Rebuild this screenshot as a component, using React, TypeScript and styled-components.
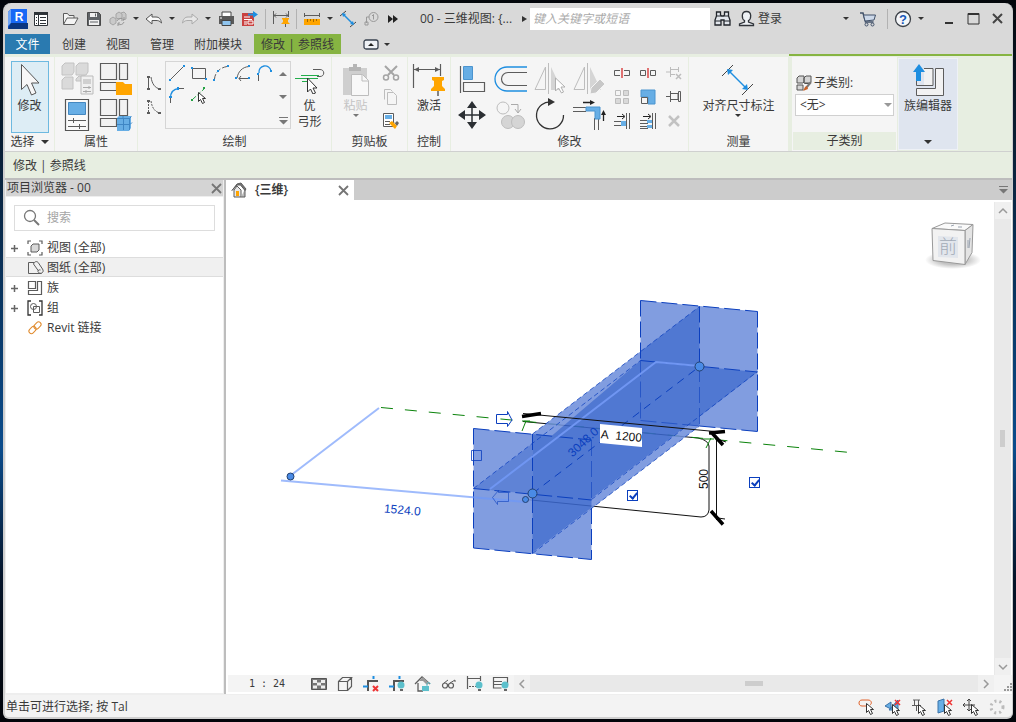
import React from "react";
import styled, { createGlobalStyle, css } from "styled-components";

const c = {
  ink: "#3a3a3a",
  line: "#5c5c5c",
  off: "#bdbdbd",
  chrome: "#d9d9d9",
  panel: "#f5f5f5",
  mint: "#e7eee1",
  green: "#86b442",
  blue: "#1e8ee0",
  sky: "#67aee5",
  orange: "#ffa500",
  model: "#0b3fbe",
};

const Global = createGlobalStyle`
  * { box-sizing: border-box; }
  body {
    margin: 0;
    background: linear-gradient(180deg, #03060b, #0a1a2b 15%, #0b4c8c 62%, #06152a 80%, #020409);
    color: ${c.ink};
    font: 12px/16px "Open Sans", "Noto Sans CJK SC", sans-serif;
  }
  button, input, select { font: inherit; color: inherit; }
  button { padding: 0; border: 0; background: none; }
  svg { display: block; flex: none; fill: none; }
`;

/* ---------- icons ---------- */

const L = c.line;
const icons: Record<string, [number, number, React.ReactNode]> = {
  logo: [20, 22, <>
    <path d="M3 1h16v17H3z" fill="#1868f5" /><path d="M3 1v17l-3 3V4z" fill="#0b4fc4" /><path d="M0 4l3-3v14l-3 3z" fill="#6fa5f5" />
    <path d="M0 21l3-6h17v6z" fill="#0a3580" />
    <text x="11" y="13" textAnchor="middle" fontSize="12" fontWeight="700" fontFamily="Liberation Sans, sans-serif" fill="#fff">R</text>
  </>],
  doc: [16, 16, <>
    <path d="M1.500 1.500h13v13h-13z" fill="#fff" stroke="#2e3338" strokeWidth="1" /><path d="M1 1h14v3H1z" fill="#2e3338" />
    <path d="M5.500 4v10M3 6.500h1M3 9.500h1M3 12.500h1M7 6.500h6M7 9.500h6M7 12.500h6" stroke="#2e3338" />
  </>],
  open: [17, 16, <><path d="M1.500 13V2.500h4l1.500 2h5v2.500M1.500 13.500l3.500-6.500h11l-3.500 6.500z" fill="#f4f4f4" stroke={L} /></>],
  save: [16, 16, <>
    <path d="M1.500 1.500h11l2 2v11h-13z" fill="#5f6367" stroke="#4a4a4a" /><path d="M4 2h7v4H4zM3 9h10v5H3z" fill="#f0f0f0" />
    <path d="M4 11h8M9.500 2.500v3" stroke="#5f6367" />
  </>],
  sync: [18, 17, <>
    <path d="M1 9l3-2 3 2v4l-3 2-3-2zM7 4l3-2 3 2v4l-3 1-3-1zM12 3l3-1 2 2v5l-3 1" fill="#c9c9c9" stroke="#a5a5a5" />
    <path d="M8 11a4 4 0 0 1 7-1M15 12a4 4 0 0 1-6 2M15 7v3h-3M9 16v-3h2" stroke="#979797" />
  </>],
  undo: [18, 14, <path d="M1 7l6-5v3h4c3 0 5 2 5.500 6-2-2.500-4-2.500-5.500-2.500H7V12z" fill="#fafafa" stroke="#555" />],
  redo: [18, 14, <path d="M17 7l-6-5v3H7c-3 0-5 2-5.500 6 2-2.500 4-2.500 5.500-2.500h4V12z" fill="#e6e6e6" stroke="#aaa" />],
  print: [17, 16, <>
    <path d="M4 1h9v5H4z" fill="#fff" stroke="#444" /><path d="M1 5h15v8H1z" fill="#5a5a5a" /><path d="M4 9.500h9v5H4z" fill="#8fc4ee" stroke="#444" />
    <path d="M2 7h2" stroke="#fff" />
  </>],
  exportPdf: [18, 17, <>
    <path d="M1 3h12v13H1z" fill="#c9413f" /><path d="M3 7h6M3 9.500h8M3 12h3M3 14h3" stroke="#fff" /><path d="M7 11h5v3H7z" stroke="#fff" />
    <path d="M7 3.500h5V1l5 3.500-5 3.500V5.500H7z" fill={c.blue} />
  </>],
  dimPin: [18, 17, <>
    <path d="M1.500 1v13M16.500 1v6M2 5.500h14M4 3.500l-2 2 2 2M14 3.500l2 2-2 2" stroke={L} />
    <path d="M10 8h7v1l-1 1v2l2 2H9l2-2v-2l-1-1z" fill={c.orange} /><path d="M13.500 14v3" stroke={L} />
  </>],
  ruler: [18, 14, <>
    <path d="M1.500 1v4M16.500 1v4M2 3.500h14" stroke={L} /><path d="M1 7h16v6H1z" fill={c.orange} /><path d="M4.500 7v3M7.500 7v2M10.500 7v3M13.500 7v2" stroke="#a56a00" />
  </>],
  aligned: [18, 18, <>
    <path d="M1 6l6-5M11 17l6-5" stroke="#444" /><path d="M4 4l10 10" stroke={c.blue} strokeWidth="1.500" /><path d="M3 3l4 1-3 3zM15 15l-4-1 3-3z" fill={c.blue} />
  </>],
  tag: [16, 16, <>
    <circle cx="9.500" cy="6" r="4.500" stroke="#999" /><path d="M9.500 3.500v5M8 5l1.500-1.500M5 6H2.500v6" stroke="#999" /><path d="M1 11h3v3H1z" stroke="#999" />
  </>],
  forward: [12, 10, <path d="M1 1l5 4-5 4zM6 1l5 4-5 4z" fill="#222" />],
  binoculars: [17, 17, <>
    <path d="M2.500 2h4v3l1 1h2l1-1V2h4v4l1.500 4v5h-6v-5h-3v5H1v-5l1.500-4z" fill="#e2e6ec" stroke="#20242a" strokeWidth="1.300" />
    <path d="M3 6h4M10 6h4M1 11h6M10 11h6" stroke="#20242a" />
  </>],
  user: [17, 17, <path d="M8.500 1.500c6 0 4.500 8 2 9v1.500l5 2v1.500H1.500V14l5-2v-1.500c-2.500-1-4-9 2-9z" fill="#eef1f5" stroke="#30343a" strokeWidth="1.300" />],
  cart: [18, 16, <>
    <path d="M1 2h3l2.500 9h8" stroke="#41516a" strokeWidth="1.500" /><path d="M4.500 4h12l-1.500 5-9 1z" fill="#cdd9ea" stroke="#41516a" /><circle cx="7.500" cy="13.500" r="1.500" stroke="#41516a" /><circle cx="13.500" cy="13.500" r="1.500" stroke="#41516a" />
  </>],
  help: [18, 18, <>
    <circle cx="9" cy="9" r="7.500" fill="#f5f7fa" stroke="#3c4148" strokeWidth="1.300" />
    <text x="9" y="13.500" textAnchor="middle" fontSize="13" fontWeight="700" fontFamily="Liberation Sans, sans-serif" fill="#1858b8">?</text>
  </>],
  minimize: [12, 14, <path d="M2 10h8v2H2z" fill="#333" />],
  maximize: [13, 13, <><path d="M1 1.500h11v10.500H1z" stroke="#333" /><path d="M1 2h11" stroke="#333" strokeWidth="2" /></>],
  close: [13, 13, <path d="M2 2l9 9M11 2l-9 9" stroke="#444" strokeWidth="2" />],
  closeSmall: [11, 11, <path d="M1 1l9 9M10 1L1 10" stroke="#757575" strokeWidth="1.800" />],
  display: [16, 11, <><rect x="1" y="1" width="14" height="9" rx="2" fill="#eef1f5" stroke="#39424f" strokeWidth="1.300" /><path d="M8 4l3 3H5z" fill="#222" /></>],
  arrow: [22, 34, <path d="M2.500 1.500v25l5.500-5 4.500 10.500 4.500-2-4.500-10h7.500z" fill="#f7f7f7" stroke="#555" />],
  typeProps: [34, 34, <>
    <path d="M2 4l3-3h9v9l-2 3H2zM16 4l3-3h9v9l-2 3H16zM2 18l3-3h8v12H2zM16 17l3-3h6v5h-9z" fill="#dadada" stroke="#c2c2c2" />
    <path d="M21 14h12v18H21z" fill="#f0f0f0" stroke="#bbb" /><path d="M23 17h8v5h-8z" fill="#d0d0d0" /><path d="M23 25.500h8M23 29.500h8M29 24v3M26 28v3" stroke="#aaa" />
  </>],
  famFolder: [34, 34, <>
    <path d="M1.500 1.500h16v16h-16zM20.500 1.500h8v16h-8zM1.500 20.500h16v8h-16z" fill="#f2f2f2" stroke={L} strokeWidth="1.200" /><path d="M17 20h7l2 2h7v11H17z" fill={c.orange} />
  </>],
  properties: [26, 34, <>
    <path d="M1.500 1.500h23v31h-23z" fill="#fafafa" stroke="#555" strokeWidth="1.200" /><path d="M4.500 4.500h17v12h-17z" fill={c.sky} stroke="#4588c0" />
    <path d="M4 22.500h18M4 28.500h18M9.500 20v5M15.500 26v5" stroke={L} />
  </>],
  famCube: [34, 34, <>
    <path d="M1.500 1.500h16v16h-16zM20.500 1.500h8v16h-8zM1.500 20.500h16v8h-16z" fill="#f2f2f2" stroke={L} strokeWidth="1.200" />
    <path d="M18 20l2-2h12v12l-2 3H18z" fill={c.sky} /><path d="M18 20.500h6v-2.500M24.500 20.500h6l2-2M18 26.500h13l2-2M24.500 20v12M30.500 20v12" stroke="#3f86c4" />
  </>],
  spline: [18, 16, <><path d="M3.500 2v13M6 2c1 7 4 11 9 12" stroke={L} /><path d="M2 1h3v2H2zM2 13h3v2H2zM13 13h3v2h-3z" fill={L} /></>],
  splineDash: [18, 16, <><path d="M3.500 2v13M6 2c1 7 4 11 9 12" stroke={L} strokeDasharray="2 1" /><path d="M2 1h3v2H2zM2 13h3v2H2zM13 13h3v2h-3z" fill={L} /></>],
  dLine: [18, 18, <><path d="M3 15L15 3" stroke={L} /><path d="M1 15h2v2H1zM15 1h2v2h-2z" fill={c.blue} /></>],
  dRect: [18, 18, <><path d="M2.500 4.500h13v10h-13z" stroke={L} /><path d="M1 3h2v2H1zM15 14h2v2h-2z" fill={c.blue} /></>],
  dArc: [18, 18, <><path d="M2.500 15C3 9 7 4 15 2.500" stroke={L} strokeDasharray="5 2" /><path d="M1 15h2v2H1zM5 6h2v2H5zM15 1h2v2h-2z" fill={c.blue} /></>],
  dCenterArc: [18, 18, <><path d="M3 14C4 8 8 3 15 2.500M5 14.500h9M7 12l-2 2.500L7 17" stroke={L} /><path d="M1 13h2v2H1zM14 1h2v2h-2zM14 13h2v2h-2z" fill={c.blue} /></>],
  dTangent: [18, 18, <><path d="M3 9a6 6 0 0 1 12-2" stroke={c.blue} strokeWidth="1.300" /><path d="M2.500 11v6" stroke={L} /><path d="M1 9h2v2H1zM14 6h2v2h-2z" fill={c.blue} /></>],
  dFillet: [18, 18, <><path d="M2.500 12C2.500 6 6 3 11 2.500" stroke={c.blue} strokeWidth="1.300" /><path d="M2.500 12v5M11 2.500h5" stroke={L} /><path d="M1 10h3v2H1zM9 1h2v3H9z" fill={c.blue} /></>],
  dPick: [18, 18, <>
    <path d="M3 13L14 3" stroke="#25a244" strokeDasharray="4 2" /><path d="M1 13h2v2H1zM13 1h2v2h-2z" fill="#25a244" /><path d="M8.500 6.500v9l2-2 2 4 2-1-2-4h3z" fill="#fff" stroke="#333" />
  </>],
  youGong: [32, 28, <>
    <path d="M1 12.500h23M7 9.500h18M8 15.500h8" stroke="#23ad4b" strokeWidth="1.200" /><path d="M19 3.500h7c5 0 5 7 0 7h-3" stroke={L} />
    <path d="M13.500 12v14l3-3 2.500 5 2.500-1-2.500-5h4z" fill="#fff" stroke="#333" />
  </>],
  paste: [28, 34, <>
    <path d="M1 5h24v27H1z" fill="#cfcfcf" /><path d="M7 4h4V1h4v3h4v4H7z" fill="#b5b5b5" /><path d="M9.500 11.500h11l6 6v15h-17z" fill="#f8f8f8" stroke={c.off} /><path d="M20 12v6h6" stroke={c.off} />
  </>],
  cut: [18, 18, <><path d="M3 2l9 9M15 2l-9 9" stroke="#a5a5a5" strokeWidth="2" /><circle cx="4" cy="13.500" r="2.500" stroke="#a5a5a5" strokeWidth="1.500" /><circle cx="14" cy="13.500" r="2.500" stroke="#a5a5a5" strokeWidth="1.500" /></>],
  copyDoc: [18, 18, <path d="M2.500 11.500v-10h6l2 2M5.500 4.500h6l3 3v9h-9z" fill="#f5f5f5" stroke={c.off} />],
  match: [18, 18, <>
    <path d="M1.500 1.500h10v13h-10z" fill="#fff" stroke={L} /><path d="M3 3h7v4H3z" fill={c.sky} /><path d="M3 9.500h5M3 12.500h5" stroke={L} />
    <path d="M7 11l3-2 5 5-2 3z" fill={c.orange} /><path d="M11 9l2 2 2-2 2 2-2 3z" fill="#666" />
  </>],
  activate: [34, 34, <>
    <path d="M1.500 1v24M28.500 1v12M2 6.500h26" stroke={L} strokeWidth="1.200" /><path d="M2 6.500l5-2.500v5zM28 6.500L23 4v5z" fill={L} />
    <path d="M20 14h12v3l-2 1v5l3 3v2H19v-2l3-3v-5l-2-1z" fill={c.orange} /><path d="M26 28v5" stroke={L} strokeWidth="1.500" />
  </>],
  align: [32, 32, <>
    <path d="M4.500 3v27" stroke={L} strokeWidth="1.200" /><path d="M7.500 3.500h9v13h-9z" fill={c.sky} stroke="#4b94cf" /><path d="M7.500 19.500h21v9h-21z" stroke={L} strokeWidth="1.200" />
  </>],
  offset: [34, 32, <><path d="M33 4H13a12 12 0 0 0 0 24h20" stroke={c.blue} strokeWidth="1.300" /><path d="M33 9.500H14a6.500 6.500 0 0 0 0 13h19" stroke={L} strokeWidth="1.200" /></>],
  mirrorPick: [34, 34, <>
    <path d="M2 27.500L12.500 5v22.500z" stroke={c.off} /><path d="M15.500 1v31" stroke={c.off} /><path d="M18 5v23h11z" fill="#d5d5d5" /><path d="M22.500 16v13l3-3 3 5 2-1-2.500-5h4z" fill="#fff" stroke="#b0b0b0" />
  </>],
  mirrorDraw: [34, 34, <>
    <path d="M2 27.500L12.500 5v22.500z" stroke={c.off} /><path d="M15.500 1v31" stroke={c.off} /><path d="M18 5v23h11z" fill="#d5d5d5" /><path d="M18 32l1-6 9-9 5 5-9 9z" fill="#c8c8c8" stroke="#f5f5f5" />
  </>],
  move: [32, 32, <><path d="M16 5v22M5 16h22" stroke="#2b2f33" strokeWidth="1.500" /><path d="M16 2l5 7H11zM16 30l5-7H11zM2 16l7-5v10zM30 16l-7-5v10z" fill="#2b2f33" /></>],
  copy: [34, 32, <>
    <circle cx="9" cy="9" r="6" stroke={c.off} /><path d="M17 5.500h7v8M21 10l3 4 3-4" stroke="#aaa" /><circle cx="14" cy="23" r="6.500" fill="#d5d5d5" stroke={c.off} /><circle cx="24" cy="23" r="6.500" fill="#d5d5d5" stroke={c.off} />
  </>],
  rotate: [34, 34, <><path d="M19 4a13.500 13.500 0 1 0 11.500 13" stroke="#333" strokeWidth="1.300" /><path d="M15 0l7 4-7 4z" fill="#333" /></>],
  trim: [34, 32, <>
    <path d="M1 8.500h13M1 12.500h13M22.500 19v12M26.500 19v12" stroke={L} /><path d="M14 8h14v12h-5v-8h-9z" fill={c.sky} stroke="#4b94cf" /><path d="M11 3.500h8M31.500 22v-7" stroke="#222" strokeWidth="1.300" /><path d="M18 1l5 2.500L18 6zM29 16l2.500-5 2.500 5z" fill="#222" />
  </>],
  split: [18, 12, <><path d="M7 3.500H1.500v5H7M11 3.500h5.500v5H11" stroke={L} /><path d="M9 1v10" stroke="#d52b2b" strokeWidth="1.300" /></>],
  splitGap: [18, 12, <><path d="M1.500 3.500h5v5h-5zM11.500 3.500h5v5h-5z" stroke={L} /><path d="M9 1v10" stroke="#d52b2b" strokeWidth="1.300" /></>],
  unpin: [18, 16, <><path d="M1 7h4M5.500 2v10M6 4.500h7M6 9.500h4M13.500 2v5" stroke={c.off} /><path d="M11 9l5 5M16 9l-5 5" stroke={c.off} strokeWidth="1.500" /></>],
  array: [18, 18, <><path d="M2.500 2.500h5v5h-5z" stroke={c.off} /><path d="M10.500 2.500h5v5h-5zM2.500 10.500h5v5h-5zM10.500 10.500h5v5h-5z" fill="#d9d9d9" stroke={c.off} /></>],
  scale: [18, 18, <><path d="M2 2h14v14H9V9H2z" fill={c.sky} stroke="#4b94cf" /><path d="M2.500 9.500h6v6h-6z" stroke={L} /></>],
  pin: [18, 16, <path d="M1 7.500h4M5.500 2v11M6 4.500h7v6H6M13.500 2.500v10h2v-10z" stroke={L} />],
  trimOne: [18, 18, <><path d="M1 9.500h8M1 13.500h8M13.500 1v16M16.500 1v16" stroke={L} /><path d="M8 9h5v5H8z" fill={c.sky} /><path d="M4 4.500h7M9 2l3 2.500L9 7" stroke="#222" /></>],
  trimMany: [18, 18, <><path d="M1 8.500h8M1 11.500h8M1 14.500h8M1 16.500h8M13.500 1v16M16.500 1v16" stroke={L} /><path d="M8 8h5v3H8zM8 13h5v3H8z" fill={c.sky} /><path d="M4 4.500h7M9 2l3 2.500L9 7" stroke="#222" /></>],
  del: [18, 16, <path d="M4 3l10 10M14 3L4 13" stroke="#c2c2c2" strokeWidth="2.500" />],
  measure: [34, 34, <>
    <path d="M1 13L12 2M21 32l11-11" stroke="#444" /><path d="M8 8l17 17" stroke={c.blue} strokeWidth="1.500" /><path d="M6 6l6 1-5 5zM27 27l-6-1 5-5z" fill={c.blue} />
  </>],
  subcat: [18, 18, <>
    <path d="M2 4l2-2h5v6l-1 1H2zM9 4l2-2h5v6l-1 1H9zM2 11h6v5H2z" fill="#d5d5d5" stroke="#555" /><path d="M9.500 9.500h6" stroke="#555" /><path d="M16 8l-5 6" stroke="#777" strokeWidth="2" /><path d="M12 12l-2 1-2 4 5-2z" fill="#c8622a" />
  </>],
  family: [34, 34, <>
    <path d="M6.500 5.500H22V22.500H6.500zM24.500 5.500h8v27h-27v-7h19z" fill="#f2f2f2" stroke={L} /><path d="M5 5h8v17H5z" fill="#dfe5ef" /><path d="M5.500 18v4.500h9" stroke={L} /><path d="M8 1l6 8h-4v9H5V9H2z" fill={c.blue} />
  </>],
  search: [18, 18, <><circle cx="7" cy="7" r="5.500" stroke="#777" strokeWidth="1.300" /><path d="M11 11l5 5" stroke="#777" strokeWidth="2" /></>],
  views: [16, 16, <>
    <path d="M1 4V1h3M12 1h3v3M15 12v3h-3M4 15H1v-3" stroke={L} strokeWidth="1.200" /><path d="M4 6l2-2h6v6l-2 2H4z" fill="#d8d8d8" stroke={L} />
  </>],
  sheets: [18, 16, <><path d="M7 2.500H1.500v11h13" stroke={L} /><path d="M6.500 4c1-3 4-3 5-1l4 6c2 3-1 5-3 4-3-1-1-4 1-3M6.500 4l5 7" stroke={L} /></>],
  fam: [16, 16, <path d="M1.500 1.500h7v7h-7zM10.500 1.500h4v13h-13v-4h9z" stroke={L} strokeWidth="1.200" />],
  group: [16, 16, <><path d="M4 1H1v14h3M12 1h3v14h-3" stroke="#333" strokeWidth="1.300" /><circle cx="6.500" cy="6.500" r="3" stroke={L} /><path d="M6.500 6.500h6v6h-6z" stroke={L} /></>],
  link: [16, 16, <>
    <rect x="-4" y="-2.500" width="8" height="5" rx="2.500" transform="translate(5.500 10) rotate(-45)" stroke="#e08a2c" />
    <rect x="-4" y="-2.500" width="8" height="5" rx="2.500" transform="translate(10.500 5.500) rotate(-45)" stroke="#e08a2c" />
  </>],
  plus: [9, 9, <path d="M4.500 1v7M1 4.500h7" stroke="#666" strokeWidth="1.500" />],
  home: [16, 16, <>
    <path d="M3 8v7h7V8L6 4z" fill="#e8e8e8" stroke={L} /><path d="M10 15h4V7" fill="#bbb" stroke={L} /><path d="M1 8.500L6 2l4-1 5 6-1 1.500L9.500 3 6 3z" fill="#777" stroke={L} /><path d="M5 9h3v5H5z" fill={c.orange} />
  </>],
  pattern: [18, 14, <><path d="M1.500 1.500h15v11h-15z" fill="#777" stroke="#555" /><path d="M3 3h4v3H3zM11 3h4v3h-4zM7 5.500h4v3H7zM3 8.500h4v3H3zM11 8.500h4v3h-4z" fill="#eee" /></>],
  box: [16, 16, <path d="M1.500 5.500h9v9h-9zM1.500 5.500l4-4h9l-4 4M14.500 1.500v9l-4 4" stroke={L} strokeWidth="1.200" />],
  cropOff: [18, 18, <><path d="M6 16V6h10" stroke="#555" strokeWidth="2" /><path d="M1 11.500h5M11.500 1v3" stroke={c.blue} strokeWidth="2" /><path d="M11 11l5 5M16 11l-5 5" stroke="#e33" strokeWidth="2" /></>],
  cropBulb: [18, 18, <><path d="M6 16V6h10" stroke="#555" strokeWidth="2" /><path d="M1 11.500h5M11.500 1v3" stroke={c.blue} strokeWidth="2" /><circle cx="13" cy="10" r="3.500" fill="#5cc0cc" /><path d="M12 14h3v2h-3z" fill="#666" /></>],
  lockHome: [18, 18, <><path d="M1 9l7-7 8 7M4 8v8h5" stroke={L} strokeWidth="1.300" /><path d="M5 6l4-4 6 6-2 2-4-4z" fill="#999" /><path d="M8 11h7v5H8z" fill="#5cc0cc" /><path d="M13 11V9c0-2 3-2 3 0" stroke="#5cc0cc" /></>],
  glasses: [16, 16, <><circle cx="4" cy="9.500" r="2.500" stroke={L} strokeWidth="1.200" /><circle cx="10" cy="9.500" r="2.500" stroke={L} strokeWidth="1.200" /><path d="M3 7l4-3M9 7l5-3v2M6.500 9h1" stroke={L} /></>],
  dimBulb: [18, 18, <><path d="M1.500 1v13M14.500 1v5M2 3.500h12" stroke={L} strokeWidth="1.200" /><path d="M3 11.500h7" stroke={L} strokeDasharray="2 1" /><circle cx="13" cy="10" r="3.500" fill="#5cc0cc" /><path d="M12 14h3v2h-3z" fill="#666" /></>],
  viewBulb: [18, 18, <><path d="M1.500 2.500h14v7h-14zM1.500 9v4h8M1 6.500h9" stroke={L} strokeWidth="1.200" /><circle cx="13" cy="10" r="3.500" fill="#5cc0cc" /><path d="M12 14h3v2h-3z" fill="#666" /></>],
  left: [8, 10, <path d="M6 1L2 5l4 4" stroke="#999" strokeWidth="1.500" />],
  right: [8, 10, <path d="M2 1l4 4-4 4" stroke="#999" strokeWidth="1.500" />],
  up: [10, 8, <path d="M1 6l4-4 4 4" stroke="#999" strokeWidth="1.500" />],
  down: [10, 8, <path d="M1 2l4 4 4-4" stroke="#999" strokeWidth="1.500" />],
  menu: [9, 8, <path d="M0 0h9v1H0zM0 3h9L4.500 7.500z" fill="#777" />],
  selLink: [18, 18, <><path d="M9 8H4C0 8 0 2 4 2h6c4 0 4 4 2 5" stroke="#e0632c" /><path d="M8.500 5.500v9l2-2 2 4 2-1-2-4h3z" fill="#fff" stroke="#333" /></>],
  selUnder: [18, 18, <><path d="M1 8l6-4v7zM5 12l9-10v10z" fill={c.sky} stroke="#3b72a8" /><path d="M11 2l5 5M16 2l-5 5" stroke="#e33" strokeWidth="1.500" /><path d="M8.500 6.500v9l2-2 2 4 2-1-2-4h3z" fill="#fff" stroke="#333" /></>],
  selPin: [18, 18, <><path d="M3 2h7M4.500 2v5M8.500 2v5M2 7.500h9M6.500 8v5" stroke={L} /><path d="M8.500 6.500v9l2-2 2 4 2-1-2-4h3z" fill="#fff" stroke="#333" /></>],
  selFace: [18, 18, <><path d="M2 3l6-2v12l-6 2z" fill={c.sky} stroke="#3b72a8" /><path d="M11 2l5 5M16 2l-5 5" stroke="#e33" strokeWidth="1.500" /><path d="M8.500 6.500v9l2-2 2 4 2-1-2-4h3z" fill="#fff" stroke="#333" /></>],
  selDrag: [18, 18, <><path d="M7 1v12M1 7h12M5 3l2-2 2 2M3 5L1 7l2 2M5 11l2 2 2-2" stroke="#444" /><path d="M9.500 6.500v9l2-2 2 4 2-1-2-4h3z" fill="#fff" stroke="#333" /></>],
  busy: [18, 18, <circle cx="9" cy="9" r="6" stroke="#bbb" strokeWidth="3" strokeDasharray="2 3" />],
  grip: [8, 8, <path d="M6 0h2v2H6zM3 3h2v2H3zM6 3h2v2H6zM0 6h2v2H0zM3 6h2v2H3zM6 6h2v2H6z" fill="#999" />],
};

const Icon = ({ n }: { n: string }) => {
  const [w, h, body] = icons[n];
  return <svg width={w} height={h} viewBox={`0 0 ${w} ${h}`} aria-hidden="true">{body}</svg>;
};

const Caret = styled.span<{ $up?: boolean; $side?: boolean; $color?: string; $big?: boolean }>`
  width: 0;
  height: 0;
  flex: none;
  border: ${(p) => (p.$big ? 4 : 3)}px solid transparent;
  ${(p) => {
    const col = p.$color ?? "#333";
    if (p.$side) return css`border-left: 5px solid ${col}; border-right: 0;`;
    if (p.$up) return css`border-bottom-color: ${col}; border-top: 0;`;
    return css`border-top-color: ${col}; border-bottom: 0;`;
  }}
`;

/* ---------- window ---------- */

const Window = styled.div`
  display: flex;
  flex-direction: column;
  min-height: calc(100vh - 6px);
  margin: 3px 3px;
  border-left: 2px solid #cfcfcf;
  border-right: 1px solid #cfcfcf;
  border-bottom: 2px solid #cfcfcf;
  border-radius: 8px 8px 6px 6px;
  overflow: hidden;
  background: ${c.chrome};
`;

const TitleBar = styled.header`
  display: flex;
  align-items: center;
  height: 31px;
  padding: 0 3px;
`;
const Brand = styled.div`
  display: flex;
  align-items: center;
  gap: 1px;
  margin-right: 5px;
`;
const IconButton = styled.button<{ $w?: number }>`
  display: flex;
  align-items: center;
  justify-content: center;
  flex: none;
  width: ${(p) => p.$w ?? 24}px;
  height: 24px;
`;
const WindowButtons = styled.div`
  display: flex;
  margin-left: 10px;
`;
const Rule = styled.span`
  flex: none;
  width: 1px;
  height: 20px;
  margin: 0 3px;
  background: #b2b2b2;
`;
const Title = styled.h1`
  margin: 0 6px 0 18px;
  width: 96px;
  font-size: 12px;
  font-weight: 400;
  line-height: 16px;
  white-space: nowrap;
`;
const TitleSearch = styled.input`
  width: 180px;
  height: 22px;
  margin-left: 3px;
  padding: 0 3px;
  border: 0;
  background: #fff;
  &::placeholder { color: #aaa; font-style: italic; opacity: 1; }
`;
const Account = styled.div`
  display: flex;
  align-items: center;
  flex: 1;
  min-width: 100px;
`;

const TabBar = styled.nav`
  display: flex;
  align-items: stretch;
  height: 20px;
`;
const RibbonTab = styled.button<{ $kind?: "file" | "context" }>`
  padding: 2px 10px 0;
  ${(p) => p.$kind === "file" && css`width: 45px; margin-right: 2px; background: #2a7ab0; color: #fff;`}
  ${(p) => p.$kind === "context" && css`padding: 2px 7px 0; margin-left: 2px; background: ${c.green};`}
`;
const DisplayToggle = styled.button`
  display: flex;
  align-items: center;
  gap: 5px;
  margin-left: 22px;
`;

/* ---------- ribbon ---------- */

const Ribbon = styled.div`
  display: flex;
  height: 98px;
  padding-top: 3px;
  border-bottom: 1px solid #cfd0cf;
  background: ${c.mint};
`;
const Panel = styled.section<{ $w: number }>`
  display: flex;
  flex-direction: column;
  flex: none;
  width: ${(p) => p.$w}px;
  border-right: 1px solid ${c.mint};
  background: ${c.panel};
`;
const PanelBody = styled.div<{ $indent?: boolean }>`
  display: flex;
  align-items: flex-start;
  justify-content: center;
  flex: 1;
  padding-top: 4px;
  padding-left: ${(p) => (p.$indent ? 4 : 0)}px;
`;
const PanelName = styled.div<{ $tint?: boolean }>`
  display: flex;
  align-items: center;
  justify-content: center;
  gap: 6px;
  height: 18px;
  background: ${(p) => (p.$tint ? c.mint : "transparent")};
`;
const BigButton = styled.button<{ $on?: boolean; $off?: boolean }>`
  display: flex;
  flex-direction: column;
  align-items: center;
  min-width: 38px;
  height: 72px;
  border: 1px solid ${(p) => (p.$on ? "#6db9e0" : "transparent")};
  background: ${(p) => (p.$on ? "#ddedf5" : "transparent")};
  color: ${(p) => (p.$off ? "#c4c4c4" : c.ink)};
  white-space: nowrap;
`;
const BigIcon = styled.span`
  display: flex;
  align-items: center;
  justify-content: center;
  height: 36px;
`;
const IconGrid = styled.div<{ $cols: number; $cw: number; $ch: number }>`
  display: grid;
  grid-template-columns: repeat(${(p) => p.$cols}, ${(p) => p.$cw}px);
  grid-auto-rows: ${(p) => p.$ch}px;
`;
const GridButton = styled.button`
  display: flex;
  align-items: center;
  justify-content: center;
`;
const SideStack = styled.div`
  display: flex;
  flex-direction: column;
  gap: 8px;
  padding: 14px 2px 0 0;
`;
const Gallery = styled.div`
  display: flex;
  justify-content: space-between;
  width: 126px;
  height: 68px;
  border: 1px solid #d5d5d5;
`;
const GalleryScroll = styled.div`
  display: flex;
  flex-direction: column;
  align-items: center;
  justify-content: space-between;
  padding: 10px 3px 3px;
`;
const Context = styled.div`
  display: flex;
  flex: 1;
  margin-top: -3px;
  padding: 1px 0 0 3px;
  border-top: 2px solid ${c.green};
`;
const SubPanel = styled(Panel)`
  padding: 0 1px 1px;
`;
const SubField = styled.div`
  display: flex;
  flex-direction: column;
  flex: 1;
  padding: 17px 2px 0;
`;
const SubLabel = styled.label`
  display: flex;
  align-items: center;
  gap: 1px;
  height: 18px;
`;
const SelectBox = styled.div`
  display: grid;
  align-items: center;
  margin-top: 2px;
  border: 1px solid #d0d0d0;
  background: #fff;
  > * { grid-area: 1 / 1; }
  > span { justify-self: end; margin-right: 1px; pointer-events: none; }
`;
const Select = styled.select`
  width: 100%;
  height: 20px;
  padding: 0 4px;
  border: 0;
  background: transparent;
  appearance: none;
`;
const FamilyEditor = styled.button`
  display: flex;
  flex-direction: column;
  align-items: center;
  width: 60px;
  margin: 1px 0;
  padding-top: 3px;
  border: 1px solid #eef1f6;
  background: #dfe5ef;
  > :last-child { margin-top: 26px; }
`;

const OptionsBar = styled.div`
  padding: 6px 8px 4px;
  border-bottom: 2px solid #bdbdbd;
  background: ${c.mint};
`;

/* ---------- workspace ---------- */

const Workspace = styled.main`
  display: flex;
  flex: 1;
`;
const Browser = styled.aside`
  display: flex;
  flex-direction: column;
  flex: none;
  width: 219px;
  border: solid #eee;
  border-width: 0 1px 1px;
  background: #fff;
`;
const BrowserHead = styled.div`
  display: flex;
  align-items: center;
  justify-content: space-between;
  height: 17px;
  padding: 0 1px;
  border-bottom: 1px solid #eee;
  background: #d4d4d4;
`;
const SearchBox = styled.label`
  display: flex;
  align-items: center;
  gap: 6px;
  height: 26px;
  margin: 8px 8px 6px;
  padding: 0 8px;
  border: 1px solid #ddd;
`;
const SearchInput = styled.input`
  width: 100%;
  min-width: 0;
  border: 0;
  outline: 0;
  padding: 0;
  &::placeholder { color: #a5a5a5; opacity: 1; }
`;
const Tree = styled.ul`
  margin: 0;
  padding: 0;
  list-style: none;
`;
const TreeItem = styled.li<{ $on?: boolean }>`
  display: grid;
  grid-template-columns: 17px 20px 1fr;
  align-items: center;
  height: 20px;
  padding: 2px 0 0 4px;
  border: solid ${(p) => (p.$on ? "#ddd" : "transparent")};
  border-width: 1px 0;
  background: ${(p) => (p.$on ? "#f0f0f0" : "none")};
`;

const View = styled.section`
  display: flex;
  flex-direction: column;
  flex: 1;
  min-width: 0;
  border-left: 2px solid #bdbdbd;
  background: #fff;
`;
const ViewTabs = styled.div`
  display: flex;
  align-items: center;
  justify-content: space-between;
  height: 20px;
  padding-right: 4px;
  background: #ccc;
`;
const ViewTab = styled.div`
  display: flex;
  align-items: center;
  gap: 8px;
  width: 128px;
  height: 20px;
  padding: 0 5px;
  background: #fff;
  font-weight: 600;
  > button { margin-left: auto; }
`;
const Stage = styled.div`
  display: flex;
  flex: 1;
  min-height: 475px;
`;
const Canvas = styled.div`
  position: relative;
  flex: 1;
  min-width: 0;
  overflow: hidden;
`;
const Cube = styled.div`
  position: absolute;
  top: 16px;
  right: 10px;
`;
const LockBox = styled.input<{ $x: number; $y: number }>`
  position: absolute;
  left: ${(p) => p.$x}px;
  top: ${(p) => p.$y}px;
  width: 11px;
  height: 11px;
  margin: 0;
  appearance: none;
  border: 1px solid ${c.model};
  background: #fff;
  &:checked::before {
    content: "";
    display: block;
    width: 3px;
    height: 6px;
    margin: 0 0 0 3px;
    border: solid ${c.model};
    border-width: 0 2px 2px 0;
    transform: rotate(40deg);
  }
`;
const VScroll = styled.div`
  display: flex;
  flex-direction: column;
  align-items: center;
  justify-content: space-between;
  width: 17px;
  margin-top: 2px;
  margin-right: 1px;
  background: #e9e9e9;
`;
const Thumb = styled.span<{ $tall?: boolean }>`
  width: ${(p) => (p.$tall ? 5 : 18)}px;
  height: ${(p) => (p.$tall ? 17 : 5)}px;
  background: #cdcdcd;
`;
const ScrollButton = styled.button`
  display: flex;
  align-items: center;
  justify-content: center;
  width: 16px;
  height: 17px;
  background: #f0f0f0;
`;
const ViewBar = styled.div`
  display: flex;
  align-items: center;
  height: 17px;
  margin: 0 0 2px 2px;
  background: #f4f4f4;
`;
const Scale = styled.span`
  width: 78px;
  padding-left: 21px;
  font: 10px/16px "DejaVu Sans Mono", monospace;
  white-space: pre;
`;
const ViewButtons = styled.div`
  display: flex;
  width: 208px;
`;
const ViewButton = styled(IconButton)`
  height: 17px;
`;
const HScroll = styled.div`
  display: flex;
  align-items: center;
  justify-content: space-between;
  flex: 1;
  background: #e9e9e9;
`;
const Corner = styled.div`
  display: flex;
  align-items: flex-end;
  justify-content: flex-end;
  width: 18px;
  height: 15px;
`;
const StatusBar = styled.footer`
  display: flex;
  align-items: center;
  justify-content: space-between;
  height: 23px;
  padding: 1px 3px 0 1px;
  border-top: 1px solid #eee;
  background: #f3f3f3;
`;
const StatusIcons = styled.div`
  display: flex;
  gap: 2px;
`;

const Model = () => (
  <svg width="768" height="475" viewBox="226 200 768 475" role="img" aria-label="三维">
    <path d="M523 421.500l175 16.500q10 2 11 8v64q-1 7-8 7l-175-17.500" stroke="#111" />
    <path d="M381 407.500l469 45" stroke="#0b830b" strokeDasharray="12 12" />
    <g opacity=".88">
      <path
        fill="#7090dc"
        d="M640.500 300.500l117 11v120l-117-11zM473.500 428.500l118 11.500v119.500l-118-11.500zM532.500 434l108-82.500 59 14 58 6-58 44.500v10l-167 127.500z"
      />
      <path fill="#4a72d1" d="M473.500 488.500l59-45v50.500z" />
      <path
        fill="#3966cc"
        d="M532.500 434l19 2 89-75.500v-9l59-45v60l58 5.500-58 44.500v9.500l-12-1-96 73.500v9l-59 45z"
      />
    </g>
    <g stroke={c.model} strokeDasharray="16 5">
      <path d="M640.500 300.500l117 11M640.500 300.500v60M757.500 311.500v120M699.500 306.500V366M699.500 426l58 5.500" />
      <path d="M473.500 428.500l118 11.500M473.500 428.500V548M532.500 434v119.500M473.500 548l118 11.500M591.500 508v51.500" />
      <path d="M473.500 488.500l118 11.500M640.500 360.500l117 11.500" />
      <path d="M591.500 440v60M640.500 360.500v60M640.500 420.500l59 5.500M699.500 366v60" strokeOpacity=".6" />
      <path d="M532.500 434l167-127.500M532.500 553.500l167-127.500M473.500 488.500l167-128M591.500 499.500l166-128" strokeOpacity=".75" strokeDasharray="5 3" />
      <path d="M532.500 493.500l167-127" strokeDasharray="8 6" />
    </g>
    <path d="M526 421l-4 10M711 438l-5 10M522 421h8M704 439h10" stroke="#0b830b" />
    <path d="M281 480.500l245 21.500M290 476l89-68" stroke="#6c97fa" strokeOpacity=".65" strokeWidth="2" />
    <path d="M490 489l166-127 43 4" stroke="#7096f2" strokeWidth="2" />
    <path d="M523 413.500l197 18.500M716.500 436v84M720 440l6 2M718 518l7 1" stroke="#111" />
    <path d="M522 416.500l19-3M709 433l16-1.500M712 433l11 12M711 511l12 13.500" stroke="#000" strokeWidth="3.500" />
    <g stroke={c.model}>
      <path d="M496.500 414.500h11v-3l4.500 8.500-4.500 6.500v-3h-11z" />
      <path d="M508.500 492.500h-10v-2l-6 7 5 7v-3h11z" strokeOpacity=".6" />
      <path d="M471.500 450.500h10v10h-10z" strokeOpacity=".8" />
    </g>
    <g fill="#4a8be6" stroke="#23406e">
      <circle cx="290.500" cy="476.500" r="3.500" />
      <circle cx="525.500" cy="499.500" r="3" />
      <circle cx="532.500" cy="493.500" r="4.500" />
      <circle cx="699.500" cy="366.500" r="4.500" />
    </g>
    <path d="M600 424l42 4v19l-42-4z" fill="#fff" />
    <g fontFamily="Liberation Sans, sans-serif" fontSize="12" textAnchor="middle">
      <text transform="translate(621 440) rotate(5)" fill="#111">A&#160; 1200</text>
      <text transform="translate(708 479) rotate(-90)" fill="#111">500</text>
      <text transform="translate(402 514) rotate(5)" fill={c.model}>1524.0</text>
      <text transform="translate(586 445) rotate(-43)" fill={c.model}>3048.0</text>
    </g>
  </svg>
);

const ViewCube = () => (
  <svg width="60" height="56" viewBox="924 216 60 56" role="img" aria-label="前">
    <defs>
      <radialGradient id="shade"><stop offset=".5" stopColor="#aaa" stopOpacity=".7" /><stop offset="1" stopColor="#aaa" stopOpacity="0" /></radialGradient>
    </defs>
    <ellipse cx="953" cy="260" rx="28" ry="9" fill="url(#shade)" />
    <g stroke="#999">
      <path d="M932 228.500l13-5.500 28 1.500-8 6z" fill="#fafafa" />
      <path d="M965 230.500l8-6-1 28-7 12z" fill="#e4e4e4" />
      <path d="M932 228.500l33 2v34l-32-4z" fill="#f2f2f2" />
    </g>
    <path d="M938 236l20 1v21l-20-1z" fill="#e2e6ec" />
    <text x="948" y="253" fontSize="18" fontWeight="300" textAnchor="middle" fontFamily="Noto Sans CJK SC, sans-serif" fill="#a3abb7">前</text>
    <path d="M951 226l3-1M958 227h4M968 240v8M970 238l-1 10" stroke="#9aa3b0" />
  </svg>
);

const Btn = ({ n, w, label }: { n: string; w?: number; label: string }) => (
  <IconButton $w={w} aria-label={label}><Icon n={n} /></IconButton>
);
const More = () => <IconButton $w={12} aria-label="更多"><Caret /></IconButton>;
const Grid = ({ items, cols, cw, ch }: { items: string[]; cols: number; cw: number; ch: number }) => (
  <IconGrid $cols={cols} $cw={cw} $ch={ch}>
    {items.map((n) => <GridButton key={n} aria-label={n}><Icon n={n} /></GridButton>)}
  </IconGrid>
);

const tree = [
  { icon: "views", text: "视图 (全部)", open: true },
  { icon: "sheets", text: "图纸 (全部)", on: true },
  { icon: "fam", text: "族", open: true },
  { icon: "group", text: "组", open: true },
  { icon: "link", text: "Revit 链接" },
];

export default function App() {
  return (
    <>
      <Global />
      <Window>
        <TitleBar>
          <Brand><Icon n="logo" /><Btn n="doc" label="主页" /></Brand>
          <Btn n="open" label="打开" />
          <Btn n="save" label="保存" />
          <Btn n="sync" label="同步" /><More />
          <Btn n="undo" label="放弃" /><More />
          <Btn n="redo" label="重做" /><More />
          <Btn n="print" label="打印" />
          <Btn n="exportPdf" label="导出" />
          <Rule />
          <Btn n="dimPin" label="激活尺寸标注" />
          <Rule />
          <Btn n="ruler" label="测量" /><More />
          <Btn n="aligned" label="对齐" />
          <Btn n="tag" label="标记" />
          <Btn n="forward" w={18} label="更多" />
          <Title>00 - 三维视图: {"{..."}</Title>
          <Caret $side />
          <TitleSearch aria-label="搜索" placeholder="键入关键字或短语" />
          <Account>
            <Btn n="binoculars" label="查找" />
            <Btn n="user" label="用户" />
            <button>登录</button>
          </Account>
          <More />
          <Btn n="cart" w={32} label="商店" />
          <Rule />
          <Btn n="help" label="帮助" />
          <More />
          <WindowButtons>
            <Btn n="minimize" label="最小化" />
            <Btn n="maximize" label="最大化" />
            <Btn n="close" label="关闭" />
          </WindowButtons>
        </TitleBar>
        <TabBar>
          <RibbonTab $kind="file">文件</RibbonTab>
          <RibbonTab>创建</RibbonTab>
          <RibbonTab>视图</RibbonTab>
          <RibbonTab>管理</RibbonTab>
          <RibbonTab>附加模块</RibbonTab>
          <RibbonTab $kind="context">修改 | 参照线</RibbonTab>
          <DisplayToggle aria-label="显示"><Icon n="display" /><Caret /></DisplayToggle>
        </TabBar>
        <Ribbon>
          <Panel $w={50}>
            <PanelBody>
              <BigButton $on><BigIcon><Icon n="arrow" /></BigIcon>修改</BigButton>
            </PanelBody>
            <PanelName>选择 <Caret $big /></PanelName>
          </Panel>
          <Panel $w={83}>
            <PanelBody><Grid cols={2} cw={39} ch={36} items={["typeProps", "famFolder", "properties", "famCube"]} /></PanelBody>
            <PanelName>属性</PanelName>
          </Panel>
          <Panel $w={194}>
            <PanelBody $indent>
              <SideStack>
                <GridButton aria-label="样条"><Icon n="spline" /></GridButton>
                <GridButton aria-label="虚线样条"><Icon n="splineDash" /></GridButton>
              </SideStack>
              <Gallery>
                <Grid cols={5} cw={22} ch={22} items={["dLine", "dRect", "dArc", "dCenterArc", "dTangent", "dFillet", "dPick"]} />
                <GalleryScroll>
                  <Caret $up $big $color="#777" /><Caret $big $color="#777" /><Icon n="menu" />
                </GalleryScroll>
              </Gallery>
              <BigButton><BigIcon><Icon n="youGong" /></BigIcon>优<span>弓形</span></BigButton>
            </PanelBody>
            <PanelName>绘制</PanelName>
          </Panel>
          <Panel $w={76}>
            <PanelBody $indent>
              <BigButton $off><BigIcon><Icon n="paste" /></BigIcon>粘贴<Caret $color="#777" /></BigButton>
              <Grid cols={1} cw={32} ch={24} items={["cut", "copyDoc", "match"]} />
            </PanelBody>
            <PanelName>剪贴板</PanelName>
          </Panel>
          <Panel $w={43}>
            <PanelBody><BigButton><BigIcon><Icon n="activate" /></BigIcon>激活</BigButton></PanelBody>
            <PanelName>控制</PanelName>
          </Panel>
          <Panel $w={238}>
            <PanelBody>
              <Grid cols={4} cw={39} ch={36} items={["align", "offset", "mirrorPick", "mirrorDraw", "move", "copy", "rotate", "trim"]} />
              <Grid cols={3} cw={26} ch={24} items={["split", "splitGap", "unpin", "array", "scale", "pin", "trimOne", "trimMany", "del"]} />
            </PanelBody>
            <PanelName>修改</PanelName>
          </Panel>
          <Panel $w={100}>
            <PanelBody><BigButton><BigIcon><Icon n="measure" /></BigIcon>对齐尺寸标注<Caret /></BigButton></PanelBody>
            <PanelName>测量</PanelName>
          </Panel>
          <Context>
            <SubPanel $w={106}>
              <SubField>
                <SubLabel htmlFor="subcat"><Icon n="subcat" />子类别:</SubLabel>
                <SelectBox>
                  <Select id="subcat" defaultValue="none"><option value="none">&lt;无&gt;</option></Select>
                  <Caret $big $color="#999" />
                </SelectBox>
              </SubField>
              <PanelName $tint>子类别</PanelName>
            </SubPanel>
            <FamilyEditor><BigIcon><Icon n="family" /></BigIcon>族编辑器<Caret $big /></FamilyEditor>
          </Context>
        </Ribbon>
        <OptionsBar>修改 | 参照线</OptionsBar>
        <Workspace>
          <Browser>
            <BrowserHead>项目浏览器 - 00<button aria-label="关闭"><Icon n="closeSmall" /></button></BrowserHead>
            <SearchBox><Icon n="search" /><SearchInput aria-label="搜索" placeholder="搜索" /></SearchBox>
            <Tree>
              {tree.map((t) => (
                <TreeItem key={t.text} $on={t.on}>
                  <span>{t.open && <Icon n="plus" />}</span>
                  <Icon n={t.icon} />
                  {t.text}
                </TreeItem>
              ))}
            </Tree>
          </Browser>
          <View>
            <ViewTabs>
              <ViewTab><Icon n="home" />{"{三维}"}<button aria-label="关闭"><Icon n="closeSmall" /></button></ViewTab>
              <button aria-label="视图列表"><Icon n="menu" /></button>
            </ViewTabs>
            <Stage>
              <Canvas>
                <Model />
                <LockBox type="checkbox" aria-label="锁定 1200" defaultChecked $x={401} $y={290} />
                <LockBox type="checkbox" aria-label="锁定 500" defaultChecked $x={523} $y={277} />
                <Cube><ViewCube /></Cube>
              </Canvas>
              <VScroll>
                <ScrollButton aria-label="向上"><Icon n="up" /></ScrollButton>
                <Thumb $tall />
                <ScrollButton aria-label="向下"><Icon n="down" /></ScrollButton>
              </VScroll>
            </Stage>
            <ViewBar>
              <Scale>1 : 24</Scale>
              <ViewButtons>
                {["pattern", "box", "cropOff", "cropBulb", "lockHome", "glasses", "dimBulb", "viewBulb"].map((n) => (
                  <ViewButton key={n} $w={26} aria-label={n}><Icon n={n} /></ViewButton>
                ))}
              </ViewButtons>
              <HScroll>
                <ScrollButton aria-label="向左"><Icon n="left" /></ScrollButton>
                <Thumb />
                <ScrollButton aria-label="向右"><Icon n="right" /></ScrollButton>
              </HScroll>
              <Corner><Icon n="grip" /></Corner>
            </ViewBar>
          </View>
        </Workspace>
        <StatusBar>
          单击可进行选择; 按 Tal
          <StatusIcons>
            {["selLink", "selUnder", "selPin", "selFace", "selDrag", "busy"].map((n) => <Btn key={n} n={n} label={n} />)}
          </StatusIcons>
        </StatusBar>
      </Window>
    </>
  );
}
